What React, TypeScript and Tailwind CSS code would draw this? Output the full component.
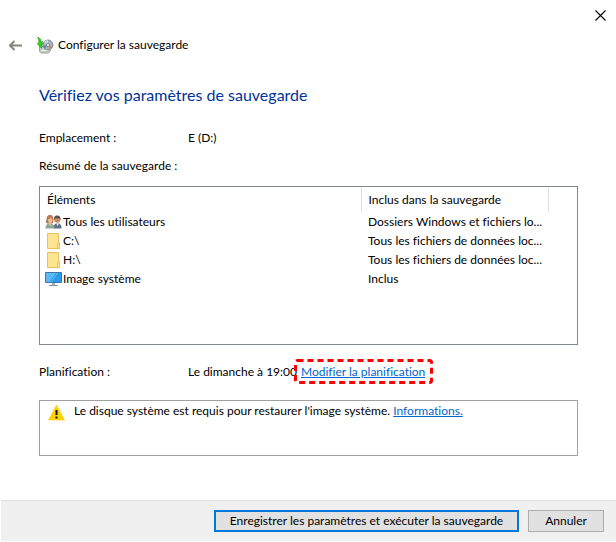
const items = [
  { icon: <UsersIcon />, name: "Tous les utilisateurs", included: "Dossiers Windows et fichiers lo..." },
  { icon: <FolderIcon />, name: "C:\\", included: "Tous les fichiers de données loc..." },
  { icon: <FolderIcon />, name: "H:\\", included: "Tous les fichiers de données loc..." },
  { icon: <MonitorIcon />, name: "Image système", included: "Inclus" },
];

function BackupIcon() {
  return (
    <svg width="17" height="17" viewBox="0 0 17 17" aria-hidden="true">
      <path d="M2.500 9v5.500l2 1.500h7l2-2.500-2-4H5z" fill="#c9cec6" stroke="#878d84" strokeWidth=".8" />
      <path d="M4.500 13.500h6.500" stroke="#eff1ed" />
      <circle cx="11" cy="8" r="5" fill="#a9b2bd" stroke="#737b84" strokeWidth=".8" />
      <path d="M11 8L7 5a5 5 0 0 1 4-2z" fill="#c9d6e4" />
      <path d="M11 8l4.500 1.500a5 5 0 0 1-2.500 3z" fill="#d98b50" />
      <path d="M11 8L6.500 9l1 2.500z" fill="#5784b5" />
      <circle cx="11" cy="8" r="1.500" fill="#fff" stroke="#68717c" strokeWidth=".8" />
      <path d="M.5 0C3 .5 4 2.500 4.200 5L6 4.500 4.500 11.500 0 6.500l1.700-.5C2 4 1.500 2 .5 0z" fill="#2fd11a" stroke="#2c8b22" strokeWidth=".5" />
    </svg>
  );
}

function UsersIcon() {
  return (
    <svg width="17" height="16" viewBox="0 0 17 16" aria-hidden="true">
      <path d="M8.500 14.500c0-3.500 1-5 4-5s4 1.500 4 5z" fill="#5d7188" />
      <path d="M11.500 9.500h2.200l-1 3z" fill="#f4f5f7" />
      <circle cx="12.200" cy="5.800" r="3" fill="#c98c62" />
      <path d="M9 6c-.5-3 .8-4.500 3.200-4.500S16 3 15.500 6.500l-1-2-4-.3z" fill="#56504d" />
      <path d="M1.500 6C1.500 2.500 2.700 1 5 1s3.800 1.700 3.500 6l-1 2.500h-5L.8 8.500z" fill="#b8704f" />
      <path d="M.5 14.500C.5 11 2 9.500 4.800 9.500S9.500 11 9.500 14.500z" fill="#91a795" />
      <path d="M3.800 9.200h2.600l-1.200 3z" fill="#eccbaa" />
      <ellipse cx="5.200" cy="6" rx="2.300" ry="3" fill="#ebbd93" />
      <path d="M2.800 5.500c1.700-.2 2.700-1 3-2 .4 1 1 1.500 2 1.800C7.500 3 6.500 2 5 2 3.500 2 2.700 3.200 2.800 5.500z" fill="#c47b55" />
    </svg>
  );
}

function FolderIcon() {
  return (
    <svg width="17" height="16" viewBox="0 0 17 16" aria-hidden="true">
      <path d="M2.500.5h11v9h1v6h-12z" fill="#ffe591" stroke="#e5c25b" />
      <path d="M12.500 15.500v-5h2v5z" fill="#ffe591" stroke="#e5c25b" />
    </svg>
  );
}

function MonitorIcon() {
  return (
    <svg width="17" height="16" viewBox="0 0 17 16" aria-hidden="true">
      <path d="M.5 1.500h16v10H.5z" fill="#2a9be8" stroke="#3c789f" />
      <path d="M1 2h10L4.500 11H1z" fill="#5bb9f5" />
      <path d="M12.500 2L6 11" stroke="#65bdf4" />
      <path d="M7 12h3v2H7z" fill="#a0b1bd" />
      <path d="M4 14.500h9" stroke="#7895a8" />
    </svg>
  );
}

function WarningIcon() {
  return (
    <svg width="17" height="17" viewBox="0 0 17 17" className="mt-px" aria-hidden="true">
      <path d="M8.500 1l8 15H.5z" fill="#ffd400" stroke="#f4c500" strokeWidth=".5" />
      <path d="M7.500 6h2v5h-2zM7.500 12.500h2v2h-2z" fill="#111" />
    </svg>
  );
}

export default function App() {
  return (
    <main className="flex min-h-screen flex-col bg-white font-['Lato','Open_Sans',sans-serif] text-[12px] leading-4 text-black [font-variant-ligatures:none]">
      <div className="flex h-[30px] justify-end">
        <button type="button" aria-label="Fermer" className="flex w-8 items-center justify-center">
          <svg width="11" height="11" viewBox="0 0 11 11" aria-hidden="true">
            <path d="M.5.500l10 10M10.500.500l-10 10" stroke="#000" strokeWidth="1.100" />
          </svg>
        </button>
      </div>

      <header className="flex h-[30px] items-center pl-[9px]">
        <button type="button" aria-label="Retour" className="mr-[15px] flex">
          <svg width="13" height="11" viewBox="0 0 13 11" aria-hidden="true">
            <path d="M1 5.500h12M5.500 1L1 5.500 5.500 10" fill="none" stroke="#85857b" strokeWidth="2" />
          </svg>
        </button>
        <BackupIcon />
        <span className="ml-1">Configurer la sauvegarde</span>
      </header>

      <section className="pr-[38px] pl-[39px]">
        <h1 className="mt-[23px] text-[16px] leading-6 text-[#003399]">Vérifiez vos paramètres de sauvegarde</h1>

        <div className="mt-[23px] flex">
          <span className="w-[149px]">Emplacement :</span>
          <span>E (D:)</span>
        </div>
        <p className="mt-3">Résumé de la sauvegarde :</p>

        <div className="mt-3 h-[159px] border border-[#828790]">
          <table className="w-full table-fixed border-collapse text-left">
            <colgroup>
              <col />
              <col className="w-[187px]" />
              <col className="w-[29px]" />
            </colgroup>
            <thead>
              <tr className="h-[25px]">
                <th className="border-r border-[#e0e0e0] p-0 pl-[7px] font-normal">Éléments</th>
                <th className="border-r border-[#e0e0e0] p-0 pl-[7px] font-normal">Inclus dans la sauvegarde</th>
                <td />
              </tr>
            </thead>
            <tbody>
              {items.map((item) => (
                <tr key={item.name} className="h-[19px]">
                  <td className="p-0 pl-[5px]">
                    <div className="flex items-center gap-px">
                      {item.icon}
                      <span>{item.name}</span>
                    </div>
                  </td>
                  <td className="p-0 pl-[7px] whitespace-nowrap">{item.included}</td>
                  <td />
                </tr>
              ))}
            </tbody>
          </table>
        </div>

        <div className="mt-[19px] flex">
          <span className="w-[149px]">Planification :</span>
          <span className="w-[113px] whitespace-nowrap">Le dimanche à 19:00</span>
          <span className="relative">
            <a href="#planification" className="text-[#0066cc] underline">Modifier la planification</a>
            <svg className="pointer-events-none absolute -top-[5px] -left-2" width="140" height="25" aria-hidden="true">
              <rect x="2.500" y="1.500" width="136" height="22" rx="2" fill="none" stroke="#f00" strokeWidth="3" strokeDasharray="6 4" />
            </svg>
          </span>
        </div>

        <div className="mt-5 flex h-14 border border-[#a0a0a0] pt-[2px] pl-2">
          <WarningIcon />
          <p className="ml-[9px]">
            Le disque système est requis pour restaurer l'image système.{" "}
            <a href="#informations" className="text-[#0066cc] underline">Informations.</a>
          </p>
        </div>
      </section>

      <footer className="mt-auto mb-px ml-px flex justify-end gap-[9px] border-t border-[#dfdfdf] bg-[#f0f0f0] py-[9px] pr-3">
        <button type="button" className="h-[22px] w-[305px] border-2 border-[#0078d7] bg-[#e1e1e1] leading-4 whitespace-nowrap">
          Enregistrer les paramètres et exécuter la sauvegarde
        </button>
        <button type="button" className="h-[22px] w-[76px] border border-[#adadad] bg-[#e1e1e1] leading-4">
          Annuler
        </button>
      </footer>
    </main>
  );
}
